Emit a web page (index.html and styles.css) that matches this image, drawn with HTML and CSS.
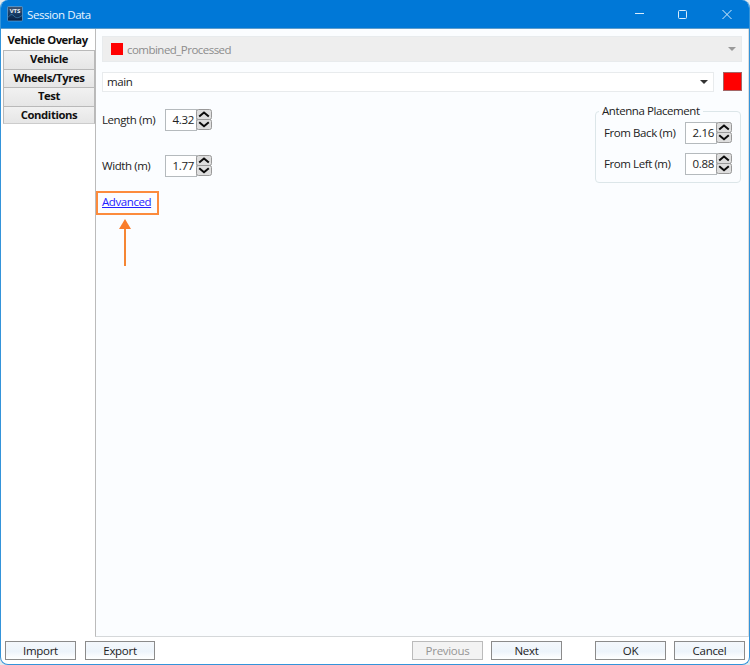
FILE: index.html
```html
<!DOCTYPE html>
<html lang="en">
<head>
<meta charset="utf-8">
<title>Session Data</title>
<link rel="stylesheet" href="styles.css">
</head>
<body>
<svg class="defs" width="0" height="0">
  <symbol id="spin" viewBox="0 0 16 22">
    <rect x=".5" y=".5" width="15" height="10" rx="2" fill="#dedede" stroke="#999"/>
    <rect x=".5" y="10.500" width="15" height="10" rx="2" fill="#dedede" stroke="#999"/>
    <path d="M3.200 7.600 8 3.600l4.800 4M3.200 13.300 8 17.300l4.800-4" fill="none" stroke="#0c0c0c" stroke-width="2"/>
  </symbol>
</svg>
<div class="window">
  <header class="titlebar">
    <svg class="logo" viewBox="0 0 16 16">
      <defs><linearGradient id="lg" x2="0" y2="1"><stop stop-color="#455770"/><stop offset=".5" stop-color="#173c66"/><stop offset="1" stop-color="#061e41"/></linearGradient></defs>
      <rect x=".5" y=".5" width="15" height="14.500" rx="1" fill="url(#lg)" stroke="#6aa3d3" stroke-width=".7"/>
      <path d="M1 11.500c2-3 4-4 6-1.500s5 2 8-.5" fill="none" stroke="#397eae" stroke-width=".8"/>
      <text x="8" y="6.500" text-anchor="middle" class="logo-text">VTS</text>
    </svg>
    <h1>Session Data</h1>
    <svg class="controls" viewBox="0 0 110 28" fill="none" stroke="#d9ecfb">
      <path d="M5 13.500h9"/><rect x="48.500" y="10.500" width="8" height="8" rx="1"/><path d="M92.500 10l9 9m0-9-9 9"/>
    </svg>
  </header>
  <div class="body">
    <nav class="tabs">
      <div class="tab active">Vehicle Overlay</div>
      <div class="tab">Vehicle</div>
      <div class="tab">Wheels/Tyres</div>
      <div class="tab">Test</div>
      <div class="tab">Conditions</div>
    </nav>
    <main class="panel">
      <div class="combo disabled"><span class="chip"></span><span class="combo-label">combined_Processed</span><i class="caret"></i></div>
      <div class="row">
        <div class="combo"><span class="combo-label">main</span><i class="caret"></i></div>
        <span class="swatch"></span>
      </div>
      <div class="settings">
        <div class="dimensions">
          <div class="field"><label>Length (m)</label><span class="value">4.32</span><svg class="spin"><use href="#spin"/></svg></div>
          <div class="field"><label>Width (m)</label><span class="value">1.77</span><svg class="spin"><use href="#spin"/></svg></div>
        </div>
        <fieldset class="antenna">
          <legend>Antenna Placement</legend>
          <div class="field"><label>From Back (m)</label><span class="value">2.16</span><svg class="spin"><use href="#spin"/></svg></div>
          <div class="field"><label>From Left (m)</label><span class="value">0.88</span><svg class="spin"><use href="#spin"/></svg></div>
        </fieldset>
      </div>
      <div class="advanced"><a>Advanced</a></div>
      <svg class="arrow" viewBox="0 0 12 47"><path d="M6 9v38" stroke="#f58634" stroke-width="2"/><path d="M6 0l6 10H0z" fill="#f97d2b"/></svg>
    </main>
  </div>
  <footer class="footer">
    <button>Import</button><button class="export">Export</button>
    <button class="previous" disabled>Previous</button><button class="next">Next</button>
    <button class="ok">OK</button><button class="cancel">Cancel</button>
  </footer>
</div>
</body>
</html>
```
FILE: styles.css
```css
* { box-sizing: border-box; }
body { margin: 0; background: #e4e8eb; font: 11.5px/16px "Open Sans", "Noto Sans", sans-serif; color: #222; overflow: hidden; letter-spacing: -.42px; }
.defs { position: absolute; }
.window { width: 750px; height: 665px; border: 1px solid #3494da; border-top: 0; border-radius: 8px; overflow: hidden; background: #fff; display: flex; flex-direction: column; }
.titlebar { height: 29px; flex: none; background: #0078d7; border-bottom: 1px solid #5d9ccb; display: flex; align-items: center; padding-left: 6px; }
.logo { width: 16px; height: 16px; }
.logo-text { font: bold 6px "Open Sans", sans-serif; letter-spacing: 0; fill: #e8f2fb; }
h1 { margin: 1px 0 0 4px; font-size: 11.5px; font-weight: 400; color: #e9f5ff; }
.controls { width: 110px; height: 28px; margin-left: auto; margin-right: 9px; }
.body { height: 608px; display: flex; flex: none; }
.tabs { width: 94px; padding-left: 2px; }
.tab { height: 18.5px; border: 1px solid #b9b9b9; border-bottom: 0; background: linear-gradient(#f1f1f1, #e6e6e6); font-size: 11.3px; font-weight: 700; color: #111; text-align: center; line-height: 16px; letter-spacing: -.4px; }
.tab.active { height: 21px; border: 0; background: #fff; margin-left: -3px; line-height: 21px; white-space: nowrap; letter-spacing: -.5px; }
.tab:last-child { border-bottom: 1px solid #ccc; }
.panel { flex: 1; background: #fbfdff; border-left: 1px solid #bbb; border-bottom: 1px solid #d5d8da; border-right: 1px solid #ddd; padding: 7px 6px 0; }
.combo { flex: 1; height: 20px; border: 1px solid #e8ebed; background: #fff; display: flex; align-items: center; padding: 0 5px 0 4px; }
.combo.disabled { height: 26px; background: #eee; color: #8c8c8c; padding-left: 8px; letter-spacing: -.53px; }
.disabled .combo-label { padding-top: 1px; }
.chip { width: 12px; height: 12px; background: red; margin-right: 4px; }
.caret { margin-left: auto; border: 4px solid transparent; border-top-color: #333; border-bottom: 0; }
.disabled .caret { border-top-color: #999; }
.row { display: flex; margin-top: 10px; gap: 9px; height: 21px; }
.swatch { width: 19px; height: 19px; border: 1px solid #a46666; background: red; }
.settings { display: flex; justify-content: space-between; height: 98px; padding-top: 11px; }
.dimensions { padding-top: 5px; }
.field { display: flex; align-items: flex-start; height: 22px; }
.field label { width: 63px; line-height: 22px; }
.value { width: 32px; height: 22px; border: 1px solid #b5babd; background: #fff; line-height: 20px; text-align: right; padding-right: 2px; letter-spacing: -.3px; }
.spin { width: 16px; height: 22px; margin-left: -1px; }
.dimensions .field + .field { margin-top: 24px; }
.antenna { width: 146px; height: 79px; margin: 0 1px 0 0; padding: 4px 8px 0; border: 1px solid #dce6e9; border-radius: 4px; }
.antenna legend { padding: 0 3px; margin-left: -5px; line-height: 14px; }
.antenna label { width: 81px; }
.antenna .field + .field { margin-top: 9px; }
.advanced { width: 63px; height: 24px; margin: 0 0 0 -6px; border: 2px solid #fc8b3c; padding-left: 4px; line-height: 17px; letter-spacing: -.42px; }
.advanced a { color: #22f; text-decoration: underline; }
.arrow { display: block; width: 12px; height: 47px; margin: 4px 0 0 17px; }
.footer { display: flex; padding: 4px 0 0 4px; }
button { width: 71px; height: 19px; padding: 0; border: 1px solid #8b8b8b; background: linear-gradient(#f4f8fc, #edf4fb 55%, #fff); font: inherit; line-height: 17px; letter-spacing: -.3px; color: #222; }
button:disabled { background: #f3f3f3; border-color: #bbb; color: #959595; }
.export { margin-left: 9px; width: 70px; }
.previous { margin-left: 257px; }
.next { margin-left: 8px; }
.ok { margin-left: 33px; }
.cancel { margin-left: 8px; }
```
